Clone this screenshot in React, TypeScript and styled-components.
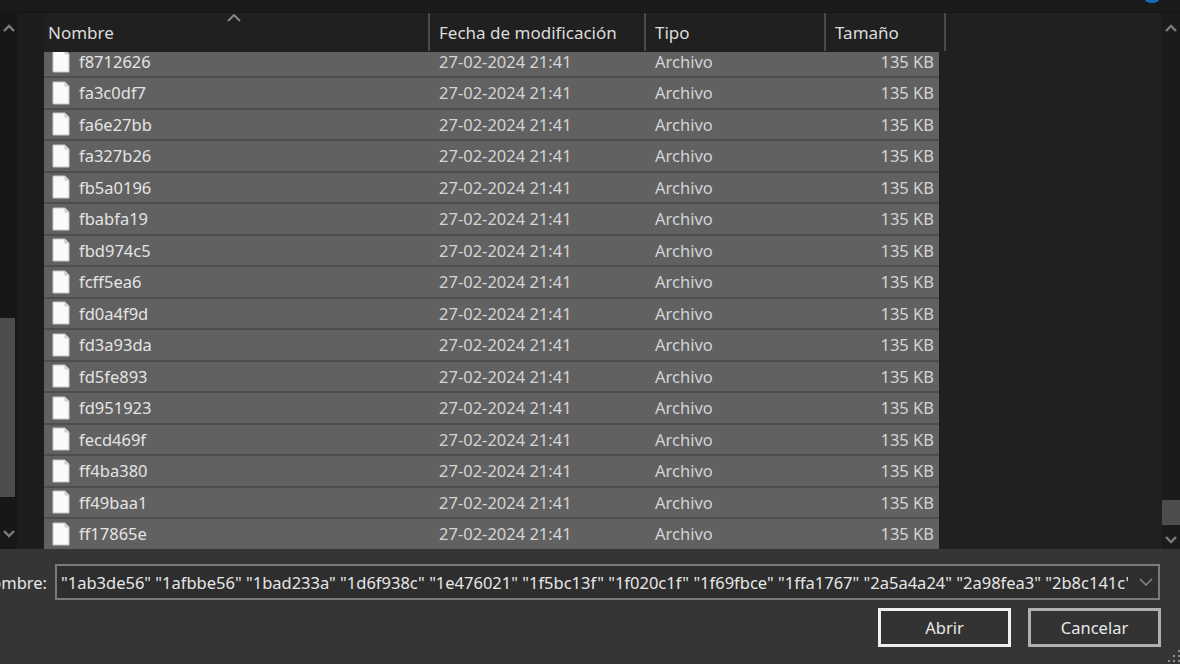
import React from "react";
import styled, { createGlobalStyle } from "styled-components";

const GlobalStyle = createGlobalStyle`
  html, body {
    margin: 0;
    padding: 0;
    background: #353535;
  }
  body {
    font-family: "Noto Sans", "Open Sans", sans-serif;
    -webkit-font-smoothing: subpixel-antialiased;
  }
`;

const Dialog = styled.div`
  width: 1180px;
  height: 664px;
  overflow: hidden;
  display: flex;
  flex-direction: column;
  background: #353535;
  color: #e2e2e2;
`;

const TopStrip = styled.div`
  position: relative;
  height: 13px;
  flex: none;
  background: #1a1a1a;
  border-bottom: 1px solid #141414;
  box-sizing: border-box;
`;

const BlueDot = styled.div`
  position: absolute;
  top: -8px;
  left: 1144px;
  width: 16px;
  height: 11px;
  border-radius: 50%;
  background: #0f6cbd;
`;

const Browser = styled.div`
  display: flex;
  height: 536px;
  flex: none;
`;

const Scrollbar = styled.div<{ $width: number; $bg: string }>`
  width: ${(p) => p.$width}px;
  flex: none;
  display: flex;
  flex-direction: column;
  background: ${(p) => p.$bg};
`;

const ScrollArrow = styled.div`
  height: 30px;
  flex: none;
  display: flex;
  align-items: center;
  justify-content: center;
  color: #7c7c7c;
`;

const ScrollTrack = styled.div<{ $top: number; $thumb: number; $thumbWidth: number }>`
  flex: 1;
  padding-top: ${(p) => p.$top}px;
  & > div {
    width: ${(p) => p.$thumbWidth}px;
    height: ${(p) => p.$thumb}px;
    background: #4d4d4d;
  }
`;

const NavGutter = styled.div`
  width: 27px;
  flex: none;
  background: #1d1d1d;
`;

const Details = styled.div`
  flex: 1;
  min-width: 0;
  display: flex;
  flex-direction: column;
  background: #202020;
`;

const Header = styled.div`
  position: relative;
  height: 39px;
  flex: none;
  display: grid;
  grid-template-columns: 386px 216px 180px 120px;
  box-sizing: border-box;
`;

const HeaderCell = styled.div<{ $inset?: number }>`
  display: flex;
  align-items: center;
  padding: 1px 0 0 ${(p) => p.$inset ?? 9}px;
  font-size: 17px;
  color: #dcdcdc;
  border-right: 2px solid #4a4a4a;
  box-sizing: border-box;
  height: 38px;
  white-space: nowrap;
`;

const SortCaret = styled.svg`
  position: absolute;
  top: 1px;
  left: 183px;
  color: #8a8a8a;
`;

const Rows = styled.div`
  flex: 1;
  overflow: hidden;
`;

const RowList = styled.div`
  width: 895px;
  margin-top: -5.5px;
`;

const Row = styled.div`
  height: 31.5px;
  box-sizing: border-box;
  display: grid;
  grid-template-columns: 386px 216px 180px 113px;
  align-items: center;
  background: #616161;
  border-bottom: 2px solid #4d4d4d;
  font-size: 16.5px;
  color: #d4d4d4;
`;

const NameCell = styled.div`
  display: flex;
  align-items: center;
  gap: 9px;
  padding-left: 8px;
  color: #e4e4e4;
`;

const Cell = styled.div`
  padding-left: 9px;
  white-space: nowrap;
`;

const SizeCell = styled.div`
  text-align: right;
  padding-right: 5px;
  white-space: nowrap;
`;

const Footer = styled.div`
  flex: 1;
  display: flex;
  flex-direction: column;
  position: relative;
`;

const FileNameRow = styled.div`
  display: flex;
  align-items: center;
  margin-top: 15px;
  padding-right: 20px;
  justify-content: flex-end;
`;

const FileLabel = styled.label`
  font-size: 16.5px;
  color: #e6e6e6;
  white-space: nowrap;
  margin-right: 8px;
`;

const FileCombo = styled.div`
  width: 1105px;
  height: 36px;
  box-sizing: border-box;
  border: 2px solid #7a7a7a;
  background: #2e2e2e;
  display: flex;
  align-items: center;
  padding: 0 3px 0 4px;
  gap: 11px;
`;

const ComboText = styled.div`
  flex: 1;
  min-width: 0;
  overflow: hidden;
  white-space: nowrap;
  font-size: 16.5px;
  color: #e6e6e6;
`;

const ComboCaret = styled.svg`
  flex: none;
  margin-right: 2px;
  color: #8c8c8c;
`;

const ButtonRow = styled.div`
  display: flex;
  justify-content: flex-end;
  gap: 17px;
  margin-top: 8px;
  padding-right: 19px;
`;

const DialogButton = styled.button<{ $primary?: boolean }>`
  width: 133px;
  height: 39px;
  box-sizing: border-box;
  background: #333333;
  color: #e8e8e8;
  font-family: inherit;
  font-size: 16.5px;
  border: 3px solid ${(p) => (p.$primary ? "#f0f0f0" : "#b0b0b0")};
  padding: 0;
`;

const Grip = styled.svg`
  position: absolute;
  right: 0;
  bottom: 0;
  color: #8f8f8f;
`;

const files = [
  "f8712626", "fa3c0df7", "fa6e27bb", "fa327b26", "fb5a0196", "fbabfa19",
  "fbd974c5", "fcff5ea6", "fd0a4f9d", "fd3a93da", "fd5fe893", "fd951923",
  "fecd469f", "ff4ba380", "ff49baa1", "ff17865e",
];

const FileIcon = () => (
  <svg width="18" height="24" viewBox="0 0 18 24">
    <path d="M1 1h12l4 4v18H1z" fill="#fafafa" stroke="#c8c8c8" strokeWidth="1" />
    <path d="M13 1v4h4" fill="#d4d4d4" stroke="#c8c8c8" strokeWidth="1" />
  </svg>
);

const Chevron = ({ up }: { up?: boolean }) => (
  <svg width="12" height="8" viewBox="0 0 12 8">
    <path
      d={up ? "M1 7l5-5 5 5" : "M1 1l5 5 5-5"}
      fill="none"
      stroke="currentColor"
      strokeWidth="2.4"
    />
  </svg>
);

export default function App() {
  return (
    <Dialog>
      <GlobalStyle />
      <TopStrip>
        <BlueDot />
      </TopStrip>
      <Browser>
        <Scrollbar $width={17} $bg="#171717">
          <ScrollArrow>
            <Chevron up />
          </ScrollArrow>
          <ScrollTrack $top={275} $thumb={179} $thumbWidth={15}>
            <div />
          </ScrollTrack>
          <ScrollArrow>
            <Chevron />
          </ScrollArrow>
        </Scrollbar>
        <NavGutter />
        <Details>
          <Header>
            <HeaderCell $inset={4}>Nombre</HeaderCell>
            <HeaderCell>Fecha de modificación</HeaderCell>
            <HeaderCell>Tipo</HeaderCell>
            <HeaderCell>Tamaño</HeaderCell>
            <SortCaret width="14" height="8" viewBox="0 0 14 8">
              <path d="M1 7l6-6 6 6" fill="none" stroke="currentColor" strokeWidth="1.8" />
            </SortCaret>
          </Header>
          <Rows>
            <RowList>
              {files.map((name) => (
                <Row key={name}>
                  <NameCell>
                    <FileIcon />
                    {name}
                  </NameCell>
                  <Cell>27-02-2024 21:41</Cell>
                  <Cell>Archivo</Cell>
                  <SizeCell>135 KB</SizeCell>
                </Row>
              ))}
            </RowList>
          </Rows>
        </Details>
        <Scrollbar $width={18} $bg="#1b1b1b">
          <ScrollArrow>
            <Chevron up />
          </ScrollArrow>
          <ScrollTrack $top={457} $thumb={25} $thumbWidth={18}>
            <div />
          </ScrollTrack>
          <ScrollArrow>
            <Chevron />
          </ScrollArrow>
        </Scrollbar>
      </Browser>
      <Footer>
        <FileNameRow>
          <FileLabel>Nombre:</FileLabel>
          <FileCombo>
            <ComboText>
              "1ab3de56" "1afbbe56" "1bad233a" "1d6f938c" "1e476021" "1f5bc13f" "1f020c1f" "1f69fbce" "1ffa1767" "2a5a4a24" "2a98fea3" "2b8c141c" "2b9d01aa"
            </ComboText>
            <ComboCaret width="14" height="8" viewBox="0 0 14 8">
              <path d="M1 1l6 6 6-6" fill="none" stroke="currentColor" strokeWidth="1.4" />
            </ComboCaret>
          </FileCombo>
        </FileNameRow>
        <ButtonRow>
          <DialogButton $primary>Abrir</DialogButton>
          <DialogButton>Cancelar</DialogButton>
        </ButtonRow>
        <Grip width="14" height="16" viewBox="0 0 14 16">
          <g fill="currentColor">
            <rect x="12" y="2" width="2" height="2" />
            <rect x="7" y="7" width="2" height="2" />
            <rect x="12" y="7" width="2" height="2" />
            <rect x="2" y="12" width="2" height="2" />
            <rect x="7" y="12" width="2" height="2" />
            <rect x="12" y="12" width="2" height="2" />
          </g>
        </Grip>
      </Footer>
    </Dialog>
  );
}
